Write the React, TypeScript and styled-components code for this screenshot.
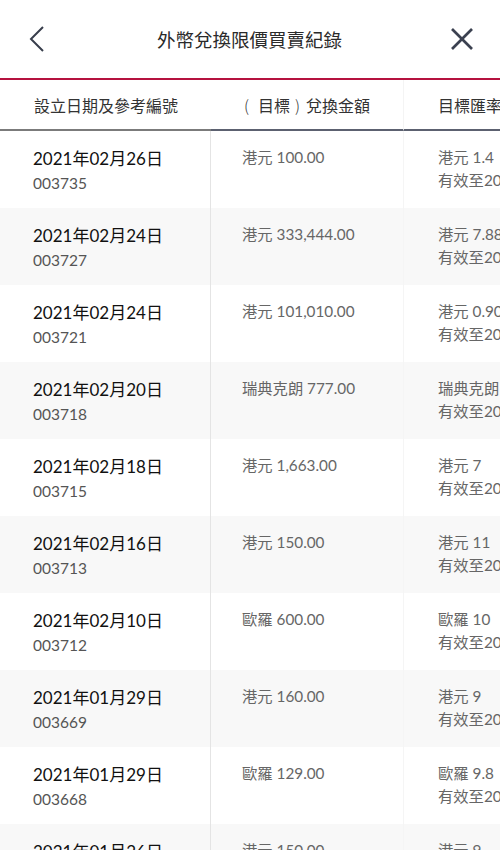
import React from "react";
import styled, { createGlobalStyle } from "styled-components";

interface Record {
  date: string;
  ref: string;
  amount: string;
  rate: string;
  expiry: string;
}

const records: Record[] = [
  { date: "2021年02月26日", ref: "003735", amount: "港元 100.00", rate: "港元 1.4", expiry: "有效至2021年03月26日" },
  { date: "2021年02月24日", ref: "003727", amount: "港元 333,444.00", rate: "港元 7.888", expiry: "有效至2021年03月24日" },
  { date: "2021年02月24日", ref: "003721", amount: "港元 101,010.00", rate: "港元 0.901", expiry: "有效至2021年03月24日" },
  { date: "2021年02月20日", ref: "003718", amount: "瑞典克朗 777.00", rate: "瑞典克朗 1.2", expiry: "有效至2021年03月20日" },
  { date: "2021年02月18日", ref: "003715", amount: "港元 1,663.00", rate: "港元 7", expiry: "有效至2021年03月18日" },
  { date: "2021年02月16日", ref: "003713", amount: "港元 150.00", rate: "港元 11", expiry: "有效至2021年03月16日" },
  { date: "2021年02月10日", ref: "003712", amount: "歐羅 600.00", rate: "歐羅 10", expiry: "有效至2021年03月10日" },
  { date: "2021年01月29日", ref: "003669", amount: "港元 160.00", rate: "港元 9", expiry: "有效至2021年02月28日" },
  { date: "2021年01月29日", ref: "003668", amount: "歐羅 129.00", rate: "歐羅 9.8", expiry: "有效至2021年02月28日" },
  { date: "2021年01月26日", ref: "003660", amount: "港元 150.00", rate: "港元 9", expiry: "有效至2021年02月26日" },
];

const GlobalStyle = createGlobalStyle`
  body {
    margin: 0;
    background: #ffffff;
    font-family: Lato, "Noto Sans CJK TC", sans-serif;
    overflow: hidden;
  }
`;

function App() {
  return (
    <Page lang="zh-Hant-TW">
      <GlobalStyle />
      <TopBar>
        <IconButton aria-label="back">
          <svg width="24" height="28" viewBox="0 0 24 28">
            <polyline points="18,2 6,14 18,26" fill="none" stroke="#383e4c" strokeWidth="2" />
          </svg>
        </IconButton>
        <Title>外幣兌換限價買賣紀錄</Title>
        <IconButton aria-label="close">
          <svg width="24" height="24" viewBox="0 0 24 24">
            <line x1="2" y1="2" x2="22" y2="22" stroke="#3b4150" strokeWidth="2.6" />
            <line x1="22" y1="2" x2="2" y2="22" stroke="#3b4150" strokeWidth="2.6" />
          </svg>
        </IconButton>
      </TopBar>
      <Table>
        <HeadRow>
          <HeadCell $first>設立日期及參考編號</HeadCell>
          <HeadCell>
            <Paren $side="left">(</Paren>目標<Paren $side="right">)</Paren>兌換金額
          </HeadCell>
          <HeadCell $last>目標匯率</HeadCell>
        </HeadRow>
        {records.map((r, i) => (
          <Row key={i} $alt={i % 2 === 1}>
            <DateCell>
              <DateText>{r.date}</DateText>
              <RefText>{r.ref}</RefText>
            </DateCell>
            <Cell>
              <ValueText>{r.amount}</ValueText>
            </Cell>
            <Cell $last>
              <ValueText>{r.rate}</ValueText>
              <ValueText>{r.expiry}</ValueText>
            </Cell>
          </Row>
        ))}
      </Table>
    </Page>
  );
}

const Page = styled.div`
  width: 500px;
  height: 850px;
  overflow: hidden;
  background: #ffffff;
`;

const TopBar = styled.div`
  display: flex;
  align-items: center;
  justify-content: space-between;
  height: 80px;
  padding: 0 25px 0 24px;
  border-bottom: 2px solid #b5123f;
  box-sizing: border-box;
`;

const IconButton = styled.div`
  width: 26px;
  height: 28px;
  display: flex;
  align-items: center;
  justify-content: center;
`;

const Title = styled.div`
  font-family: "Noto Sans CJK TC", sans-serif;
  font-size: 18.5px;
  color: #2a2a2a;
`;

const Table = styled.div`
  display: flex;
  flex-direction: column;
  width: 620px;
`;

const HeadRow = styled.div`
  display: grid;
  grid-template-columns: 211px 192px 1fr;
  height: 51px;
`;

const HeadCell = styled.div<{ $first?: boolean; $last?: boolean }>`
  display: flex;
  align-items: center;
  padding-left: ${(p) => (p.$first ? "34px" : p.$last ? "34px" : "31px")};
  font-family: "Noto Sans CJK TC", sans-serif;
  font-size: 16px;
  color: #333333;
  border-bottom: 2px solid ${(p) => (p.$first ? "#7b7b7b" : "#5c6170")};
  border-left: ${(p) => (p.$last ? "1px solid #f4f4f4" : "none")};
  white-space: nowrap;
`;

const Paren = styled.span<{ $side: "left" | "right" }>`
  display: inline-block;
  width: 16px;
  box-sizing: border-box;
  padding-left: ${(p) => (p.$side === "left" ? "2px" : "5px")};
  font-weight: 300;
`;

const Row = styled.div<{ $alt: boolean }>`
  display: grid;
  grid-template-columns: 211px 192px 1fr;
  height: 77px;
  background: ${(p) => (p.$alt ? "#f8f8f8" : "#ffffff")};
`;

const DateCell = styled.div`
  display: flex;
  flex-direction: column;
  padding: 15px 0 0 33px;
  border-right: 1px solid #e4e4e4;
`;

const DateText = styled.div`
  font-size: 17px;
  line-height: 25px;
  color: #111111;
  white-space: nowrap;
`;

const RefText = styled.div`
  font-size: 15.5px;
  line-height: 25px;
  color: #555555;
`;

const Cell = styled.div<{ $last?: boolean }>`
  display: flex;
  flex-direction: column;
  padding: 15px 0 0 ${(p) => (p.$last ? "34px" : "31px")};
  border-left: ${(p) => (p.$last ? "1px solid #f5f5f5" : "none")};
`;

const ValueText = styled.div`
  font-size: 15.3px;
  line-height: 23px;
  color: #666666;
  white-space: nowrap;
`;

export default App;
